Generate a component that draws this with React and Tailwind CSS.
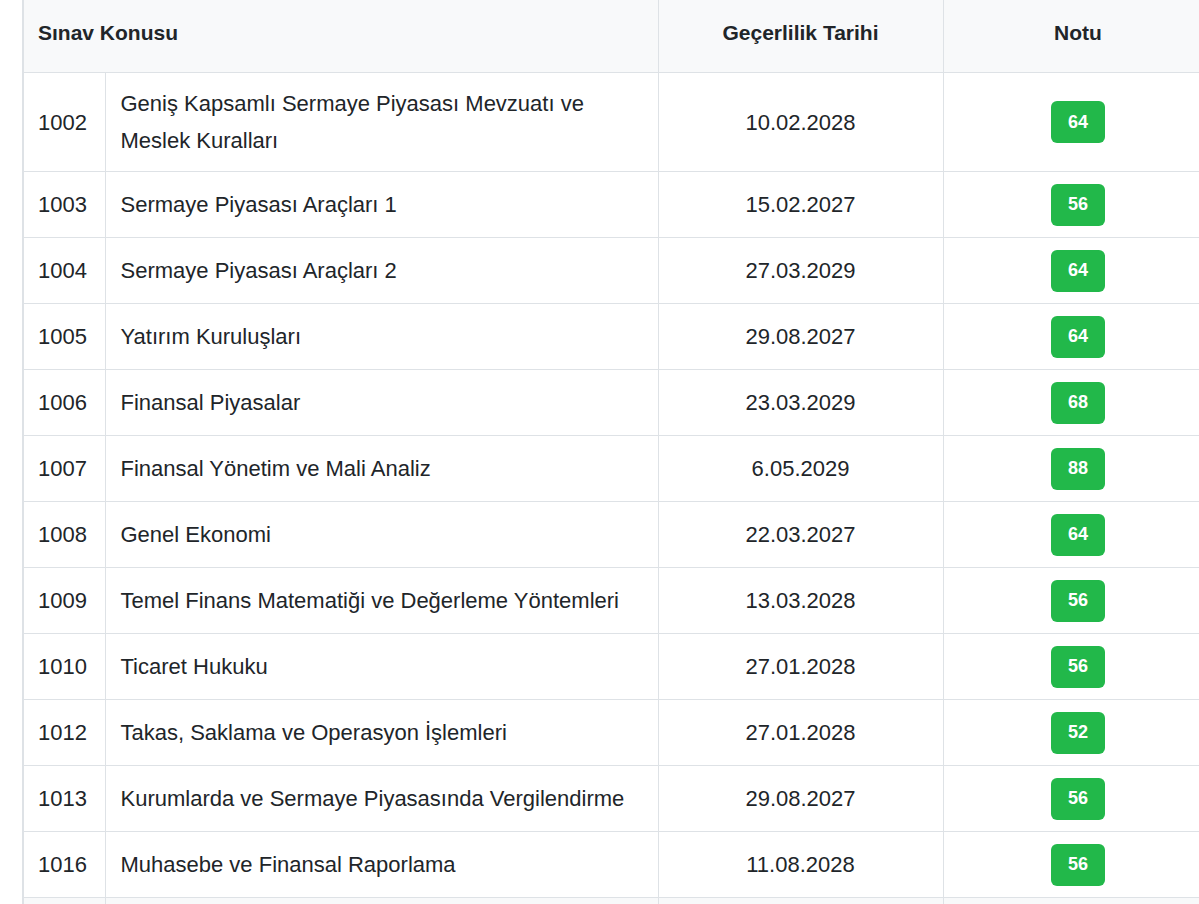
const rows = [
  ["1002", "Geniş Kapsamlı Sermaye Piyasası Mevzuatı ve Meslek Kuralları", "10.02.2028", "64"],
  ["1003", "Sermaye Piyasası Araçları 1", "15.02.2027", "56"],
  ["1004", "Sermaye Piyasası Araçları 2", "27.03.2029", "64"],
  ["1005", "Yatırım Kuruluşları", "29.08.2027", "64"],
  ["1006", "Finansal Piyasalar", "23.03.2029", "68"],
  ["1007", "Finansal Yönetim ve Mali Analiz", "6.05.2029", "88"],
  ["1008", "Genel Ekonomi", "22.03.2027", "64"],
  ["1009", "Temel Finans Matematiği ve Değerleme Yöntemleri", "13.03.2028", "56"],
  ["1010", "Ticaret Hukuku", "27.01.2028", "56"],
  ["1012", "Takas, Saklama ve Operasyon İşlemleri", "27.01.2028", "52"],
  ["1013", "Kurumlarda ve Sermaye Piyasasında Vergilendirme", "29.08.2027", "56"],
  ["1016", "Muhasebe ve Finansal Raporlama", "11.08.2028", "56"],
];

export default function App() {
  return (
    <div className="w-[1199px] h-[904px] overflow-hidden bg-white pl-[22px] text-[#212529]" style={{ fontFamily: '"Liberation Sans", Arial, sans-serif' }}>
      <table className="w-[1190px] table-fixed border-collapse border-l-2 border-[#dee2e6] -mt-px">
        <colgroup>
          <col className="w-[82px]" />
          <col className="w-[553px]" />
          <col className="w-[285px]" />
          <col className="w-[270px]" />
        </colgroup>
        <thead>
          <tr className="bg-[#f8f9fa] h-[73px] text-[21px] font-bold">
            <th colSpan={2} className="text-left pl-[14px] pb-[6px] border border-[#dee2e6] border-l-0">Sınav Konusu</th>
            <th className="pb-[6px] border border-[#dee2e6]">Geçerlilik Tarihi</th>
            <th className="pb-[6px] border border-[#dee2e6]">Notu</th>
          </tr>
        </thead>
        <tbody className="text-[22px]">
          {rows.map((r, i) => (
            <tr key={r[0]} className={i === 0 ? "h-[99px]" : "h-[66px]"}>
              <td className="pl-[14px] border border-[#dee2e6] border-l-0">{r[0]}</td>
              <td className="pl-[15px] pr-4 border border-[#dee2e6] leading-[37px]">{r[1]}</td>
              <td className="text-center border border-[#dee2e6]">{r[2]}</td>
              <td className="text-center border border-[#dee2e6]">
                <span className="inline-flex items-center justify-center w-[54px] h-[42px] rounded-md bg-[#22b84a] text-white font-bold text-[18px]">{r[3]}</span>
              </td>
            </tr>
          ))}
          <tr className="h-[66px] bg-[#f8f9fa]">
            <td className="border border-[#dee2e6] border-l-0"></td>
            <td className="border border-[#dee2e6]"></td>
            <td className="border border-[#dee2e6]"></td>
            <td className="border border-[#dee2e6]"></td>
          </tr>
        </tbody>
      </table>
    </div>
  );
}
